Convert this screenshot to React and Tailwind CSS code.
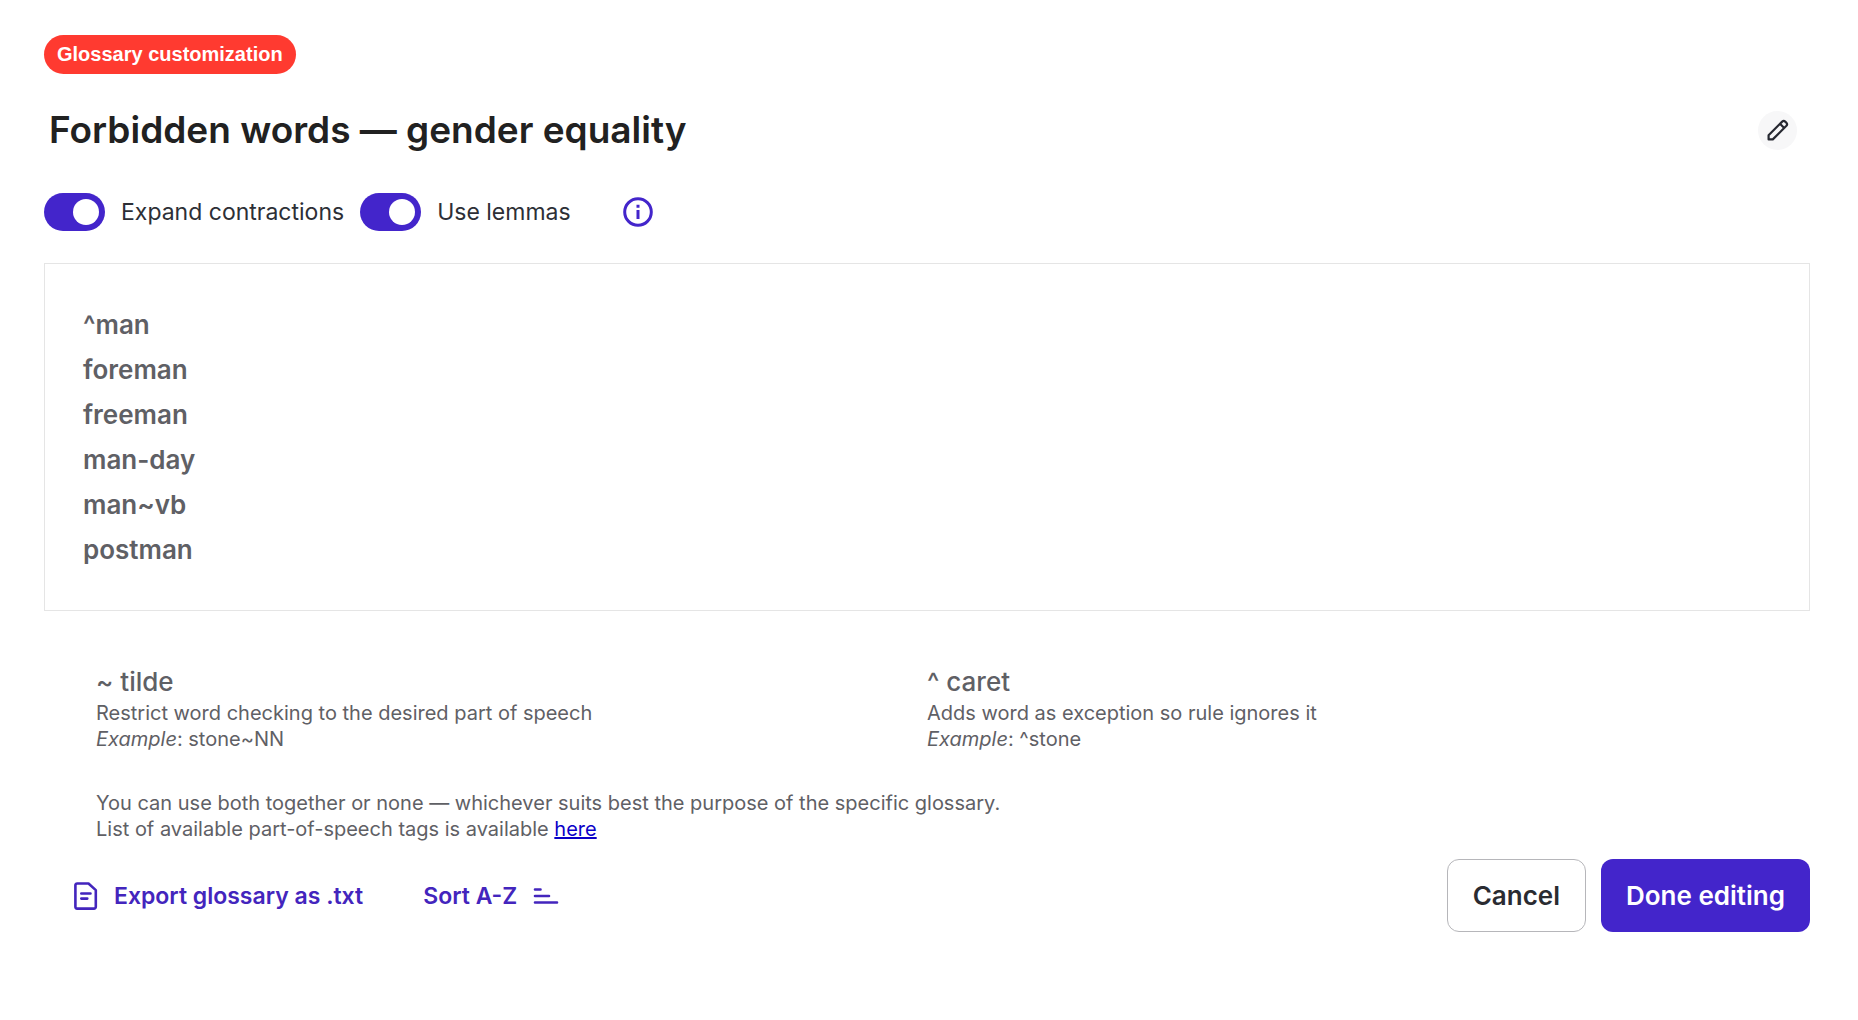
import { useState } from "react";

const Toggle = ({ id, label, checked, onChange }) => {
  return (
    <label htmlFor={id} className="flex items-center gap-4 text-[23px] leading-8 text-[#2d2f36] cursor-pointer">
      <input
        id={id}
        type="checkbox"
        checked={checked}
        onChange={onChange}
        className="appearance-none w-[61px] h-[38px] rounded-full bg-gray-300 checked:bg-[#4325cb] px-1.5 flex items-center checked:justify-end before:block before:size-[26px] before:rounded-full before:bg-white"
      />
      {label}
    </label>
  );
};

const Hint = ({ title, text, example }) => {
  return (
    <div>
      <h2 className="text-[26px] leading-9 font-medium">{title}</h2>
      <p>{text}</p>
      <p>
        <em>Example</em>: {example}
      </p>
    </div>
  );
};

const App = () => {
  const [expand, setExpand] = useState(true);
  const [lemmas, setLemmas] = useState(true);
  const [words, setWords] = useState("^man\nforeman\nfreeman\nman-day\nman~vb\npostman");

  const sortWords = () => setWords(words.split("\n").sort().join("\n"));

  return (
    <main className="bg-white pl-11 pt-[35px] pb-20 pr-12 font-['Inter',sans-serif]">
      <span className="inline-block bg-[#ff3a30] text-white font-['Liberation_Sans',sans-serif] font-bold text-[20px] leading-[39px] rounded-full px-[13px] align-top">
        Glossary customization
      </span>

      <div className="flex items-center justify-between mt-[31px] pl-[5px] pr-[13px]">
        <h1 className="text-[37px] leading-[50px] font-semibold text-[#212121]">Forbidden words — gender equality</h1>
        <button type="button" aria-label="Edit name" className="size-[39px] rounded-full bg-[#f7f7f8] flex items-center justify-center">
          <svg width="24" height="24" viewBox="0 0 24 24" fill="none" stroke="#262831" strokeWidth="2.2" strokeLinejoin="round">
            <path d="M2.6 21.4v-4.2L16.2 3.6a2.2 2.2 0 0 1 3 0l1.2 1.2a2.2 2.2 0 0 1 0 3L6.8 21.4zM14 5.8l4.2 4.2" />
          </svg>
        </button>
      </div>

      <div className="flex items-center gap-4 mt-[38px]">
        <Toggle id="expand" label="Expand contractions" checked={expand} onChange={() => setExpand(!expand)} />
        <Toggle id="lemmas" label="Use lemmas" checked={lemmas} onChange={() => setLemmas(!lemmas)} />
        <button type="button" aria-label="About these options" className="ml-9">
          <svg width="30" height="30" viewBox="0 0 30 30" fill="none" stroke="#4325cb" strokeWidth="3">
            <circle cx="15" cy="15" r="13.3" />
            <path d="M15 13v9M15 7.8v3" />
          </svg>
        </button>
      </div>

      <textarea
        aria-label="Glossary words"
        rows={6}
        value={words}
        onChange={(e) => setWords(e.target.value)}
        className="block w-full mt-8 border border-[#e5e5e5] px-[38px] py-[38px] text-[26px] leading-[45px] font-semibold text-[#5f6065] resize-none outline-none"
      />

      <section className="mt-[53px] px-[52px] text-[20px] leading-[26px] text-[#5f6065]">
        <div className="grid grid-cols-2">
          <Hint title="~ tilde" text="Restrict word checking to the desired part of speech" example="stone~NN" />
          <Hint title="^ caret" text="Adds word as exception so rule ignores it" example="^stone" />
        </div>
        <p className="mt-[38px]">
          You can use both together or none — whichever suits best the purpose of the specific glossary.
          <br />
          List of available part-of-speech tags is available{" "}
          <a href="#tags" className="text-[#0b00c8] underline">here</a>
        </p>
      </section>

      <div className="flex items-center justify-between mt-[17px]">
        <div className="flex items-center gap-[60px] pl-[30px] text-[23px] leading-8 font-semibold text-[#4325bd]">
          <button type="button" className="flex items-center gap-4">
            <svg width="24" height="28" viewBox="0 0 24 28" fill="none" stroke="currentColor" strokeWidth="2.6" strokeLinecap="round" strokeLinejoin="round">
              <path d="M3.2 1.5h11.3l7.3 6.6v16.7a1.8 1.8 0 0 1-1.8 1.8H3.2a1.8 1.8 0 0 1-1.8-1.8V3.3a1.8 1.8 0 0 1 1.8-1.8zM7.3 11.5h9.2M7.3 16.6h6" />
            </svg>
            Export glossary as .txt
          </button>
          <button type="button" onClick={sortWords} className="flex items-center gap-4">
            Sort A-Z
            <svg width="26" height="18" viewBox="0 0 26 18" fill="none" stroke="currentColor" strokeWidth="2.6" strokeLinecap="round">
              <path d="M2 2.5h5.5M2 9h14M2 15.5h22" />
            </svg>
          </button>
        </div>
        <div className="flex gap-[15px] text-[26px] leading-8 font-semibold">
          <button type="button" className="h-[73px] px-[25px] rounded-xl border border-[#b6b6ba] text-[#2a2b31]">
            Cancel
          </button>
          <button type="button" className="h-[73px] px-[25px] rounded-xl bg-[#4325cb] text-white">
            Done editing
          </button>
        </div>
      </div>
    </main>
  );
};

export default App;
